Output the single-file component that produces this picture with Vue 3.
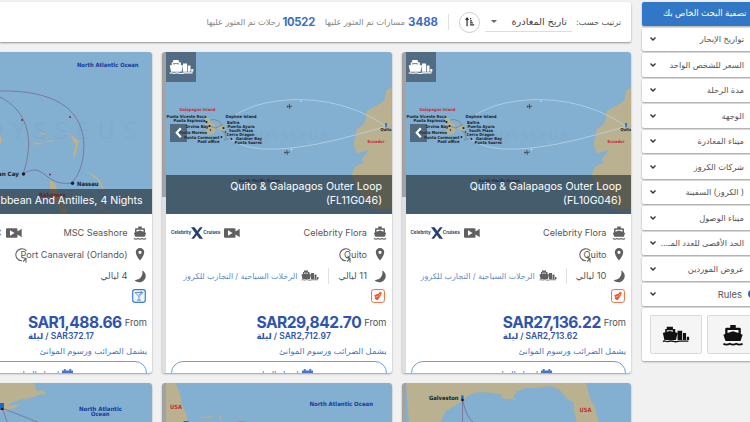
<script setup>
const filters = [
  'تواريخ الإبحار',
  'السعر للشخص الواحد',
  'مدة الرحلة',
  'الوجهة',
  'ميناء المغادرة',
  'شركات الكروز',
  '( الكروز) السفينة',
  'ميناء الوصول',
  'الحد الأقصى للعدد المـ...',
  'عروض الموردين',
  'Rules',
];

const cruises = [
  {
    id: 'msc',
    title: ['Bahamas, Caribbean And Antilles, 4 Nights'],
    ship: 'MSC Seashore',
    port: 'Port Canaveral (Orlando)',
    nights: 4,
    price: 'SAR1,488.66',
    perNight: 'SAR372.17',
  },
  {
    id: 'fl11',
    title: ['Quito & Galapagos Outer Loop', '(FL11G046)'],
    ship: 'Celebrity Flora',
    port: 'Quito',
    nights: 11,
    price: 'SAR29,842.70',
    perNight: 'SAR2,712.97',
    tour: true,
  },
  {
    id: 'fl10',
    title: ['Quito & Galapagos Outer Loop', '(FL10G046)'],
    ship: 'Celebrity Flora',
    port: 'Quito',
    nights: 10,
    price: 'SAR27,136.22',
    perNight: 'SAR2,713.62',
    tour: true,
  },
];

// [text, x, y, width]
const places = [
  ['Punta Vicente Roca', 167, 118, 40],
  ['Punta Espinoza', 174, 122.2, 32],
  ['Urvina Bay', 186, 127.6, 23],
  ['Punta Moreno', 179, 134.4, 28.5],
  ['Punta Cormorant', 184.5, 138.7, 35.5],
  ['Post office', 198, 143.4, 22],
  ['Daphne Island', 226, 118.2, 31],
  ['Baltra', 227.5, 123.5, 12.5],
  ['Puerto Ayora', 228, 127.8, 27],
  ['South Plaza', 229.5, 131.8, 24],
  ['Cerro Dragon', 227, 136.2, 28],
  ['Gardner Bay', 236.5, 140.2, 26],
  ['Punta Suarez', 235, 144.4, 27.5],
];
</script>

<template>
  <!-- shared icons -->
  <svg class="defs">
    <symbol id="ship" viewBox="0 0 24 24">
      <path d="M9 1h6v3h4q1.500 0 1.500 1.500V11l2 .8-2.300 6.700H3.800L1.500 11.800l2-.8V5.500Q3.500 4 5 4h4zM6 6.500v3.300l6-2 6 2V6.500z" fill-rule="evenodd" />
      <path d="M1.500 21.500c2.500 1.500 4.500 1.500 7 0 2.500 1.500 4.500 1.500 7 0 2.500 1.500 4.500 1.500 7 0" fill="none" stroke="currentColor" stroke-width="2" />
    </symbol>
    <symbol id="tour" viewBox="0 0 36 22">
      <path d="M6 1h8v3h3v4l3 1-2 9H3L1 9l3-1V4h2zM6 5.500v2l4-1 4 1v-2zM20 6h6v12h-6zM27 9h4v9h-4zM32 14h3v4h-3z" fill-rule="evenodd" />
      <path d="M1 20c3-2 4 1 7 0s4-1 7 0 5 0 7-.5h12" fill="none" stroke="currentColor" stroke-width="1.700" />
    </symbol>
    <symbol id="video" viewBox="0 0 16 10">
      <path d="M1 .3h9.500q1 0 1 1V3.500L15.700.8v8.400L11.500 6.500v2.300q0 1-1 1H1q-1 0-1-1V1.300q0-1 1-1zM4 2.300v5.400L8.500 5z" fill-rule="evenodd" />
    </symbol>
    <symbol id="plane" viewBox="-3 -3 6 6">
      <path d="M-2.800.2L2.800-.4M-.2-2.500L.3 2.500M-2.200-.9l.3 2" stroke="#3e4d59" stroke-width=".9" fill="none" />
    </symbol>
  </svg>

  <div class="page">
    <main class="main">
      <header class="toolbar" dir="rtl">
        <span class="sort-label">ترتيب حسب:</span>
        <div class="select"><span>تاريخ المغادرة</span><i class="caret"></i></div>
        <button class="round">
          <svg viewBox="0 0 12 12"><path d="M2.500 11V2M.8 3.500L2.500 1.300l1.700 2.200M6 2h1.500M6 4.500h2.500M6 7h3.500M6 9.500h5" /></svg>
        </button>
        <i class="rule"></i>
        <b class="count c1">3488</b><span class="found f1">مسارات تم العثور عليها</span>
        <b class="count c2">10522</b><span class="found">رحلات تم العثور عليها</span>
      </header>

      <div class="cards">
        <article v-for="c in cruises" :key="c.id" class="card">
          <div class="strip"></div>
          <div class="inner">
            <div class="hero">
              <svg v-if="c.tour" class="map" viewBox="166.500 52 225.500 162" preserveAspectRatio="none">
                <path class="land" d="M392 87l-5 3-2 10-8 6-10 5-2 12-8 7-2 10-1 4 3 9 6-1 5-2-1 4-5 5 2 3 3-1-12 6-3 8 8 17 13 17h20z" />
                <path class="land" d="M205 117l4 1 3 5 3 1 1 8-5 3-5-2 2-5-1-5zM219 125l6 1 1 4-5 1-3-3z" />
                <text class="mark" x="248" y="140" textLength="80">ODYSSEUS</text>
                <path class="route" d="M231 119C255 97 330 87 386 126M229 138C255 157 305 151 387 126" />
                <path class="near" d="M211 120q7-2 12 5l-7 3-6-2M222 130q7 7 3 10l7-2" />
                <g class="dot"><circle cx="207" cy="122" r="1" /><circle cx="210" cy="126" r="1" /><circle cx="211" cy="130" r=".8" /><circle cx="224" cy="128" r="1" /><circle cx="222" cy="137" r=".9" /><circle cx="232" cy="139" r=".9" /><circle cx="226" cy="132" r=".8" /></g>
                <text v-for="p in places" :key="p[0]" class="place" :x="p[1]" :y="p[2]" :textLength="p[3]" lengthAdjust="spacingAndGlyphs">{{ p[0] }}</text>
                <text class="place red" x="180" y="110.800" textLength="36" lengthAdjust="spacingAndGlyphs">Galapagos Island</text>
                <text class="place red" x="368" y="142.700" textLength="17" lengthAdjust="spacingAndGlyphs">Ecuador</text>
                <text class="place" x="381" y="130.500" textLength="11" lengthAdjust="spacingAndGlyphs">Quito</text>
                <path d="M385.800 123h1.400v4h-1.400z" fill="#1657c4" />
                <text class="place navy" x="239" y="182" textLength="41" lengthAdjust="spacingAndGlyphs">South Pacific Ocean</text>
                <use href="#plane" x="287" y="103.500" width="6" height="6" />
                <use href="#plane" x="284.500" y="149.500" width="6" height="6" />
                <circle cx="301.500" cy="101" r=".8" fill="#cfe4f3" />
                <circle cx="292" cy="149.500" r=".8" fill="#cfe4f3" />
              </svg>
              <svg v-else class="map" viewBox="-73 52 225.500 162" preserveAspectRatio="none">
                <text class="mark big" x="-40" y="139" textLength="176">ODYSSEUS</text>
                <path class="land" d="M0 133l2 7-2 5zM32 142l8 1 7-2 9-1-4 2-7 0-8 3zM39 132l9 2-5 1zM58 132l12 2 9 7-2 10-4 9 0-7 3-9-3-2-2-7-13-3zM88 171l6 4 7 6 3 9-2 0-3-8-6-5zM50 180l5 4 4 9 3 9 6 10-5 4-5-9-4-8-4-9zM110 187l2 3zM99 203l8 8-4-1zM147 209l4 2-4 1z" />
                <path class="cruise" d="M0 91C50 90 82 106 84 144Q84 170 72 183M0 97C28 111 35 140 23 174C45 160 43 187 72 183" />
                <circle cx="22" cy="120" r="1.100" fill="#862d46" /><circle cx="70" cy="117" r="1.100" fill="#862d46" /><circle cx="50" cy="174.500" r="1" fill="#862d46" />
                <circle cx="23.500" cy="174" r="1.700" /><circle cx="72.500" cy="183.300" r="1.700" />
                <text class="sea" x="77" y="67" textLength="61.500" lengthAdjust="spacingAndGlyphs">North Atlantic Ocean</text>
                <text class="city" x="-14" y="176" textLength="33" lengthAdjust="spacingAndGlyphs">Ocean Cay</text>
                <text class="city" x="77" y="185.500" textLength="21.500" lengthAdjust="spacingAndGlyphs">Nassau</text>
                <text class="city red" x="39" y="197" textLength="27" lengthAdjust="spacingAndGlyphs">Bahamas</text>
              </svg>
              <span v-if="c.tour" class="corner"><svg><use href="#tour" /></svg></span>
              <span v-if="c.tour" class="prev"><svg viewBox="0 0 8 12"><path d="M6 2L2.500 6 6 10" /></svg></span>
              <h3 class="title"><span v-for="t in c.title" :key="t">{{ t }}</span></h3>
            </div>

            <div class="body">
              <div class="row">
                <svg class="ico"><use href="#ship" /></svg>
                <span class="txt ship">{{ c.ship }}</span>
                <svg class="video"><use href="#video" /></svg>
                <span v-if="c.tour" class="logo"><em>Celebrity</em><svg viewBox="0 0 12 12"><path d="M0 .3h3.500L12 11.700H8.500zM9 .3h2.700L3 11.700H.3z" /></svg><em>Cruises</em></span>
                <span v-else class="brand">MSC</span>
              </div>
              <div class="row">
                <svg class="ico" viewBox="0 0 14 14"><path d="M7 1a4.200 4.200 0 0 0-4.200 4.300C2.800 8.500 7 13.500 7 13.500s4.200-5 4.200-8.200A4.200 4.200 0 0 0 7 1zm0 2.700a1.600 1.600 0 1 1 0 3.200 1.600 1.600 0 0 1 0-3.200z" /></svg>
                <span class="txt">{{ c.port }}</span>
                <svg class="return" viewBox="0 0 14 16"><path d="M12.500 4A6 6 0 1 0 8 13.800M8 10.500l4 1v4M12 11.500l-3 3" /></svg>
              </div>
              <div class="row">
                <svg class="ico" viewBox="0 0 14 14"><path d="M9.300 1.500C13 3.500 14 8 11 11.200 8.300 14 4 13.800 1.500 11c5 .3 9-4 7.800-9.500z" /></svg>
                <span class="nights" dir="rtl"><b>{{ c.nights }}</b> ليالي</span>
                <template v-if="c.tour">
                  <i class="sep"></i>
                  <svg class="tour"><use href="#tour" /></svg>
                  <span class="link" dir="rtl">الرحلات السياحية / التجارب للكروز</span>
                </template>
              </div>
              <div class="row badges">
                <svg v-if="c.tour" class="badge" viewBox="0 0 14 14"><rect x=".6" y=".6" width="12.800" height="12.800" rx="2" fill="none" stroke="#e96b45" /><path d="M3.500 6l4-1.500L9 2.800l1.800 1L10 6.500 6.500 11.300 4 10z" fill="#e65a31" /><path d="M4.500 8l3-1M7.500 4.500l2 2" stroke="#fff" stroke-width=".5" /></svg>
                <svg v-else class="badge" viewBox="0 0 14 14"><rect x=".7" y=".7" width="12.600" height="12.600" rx="2.200" fill="#eef6ff" stroke="#3d7ccb" stroke-width="1.200" /><path d="M3 3.500h8L7 7.500zM7 7.500v3.500M5 11.200h4M9.500 2l-2 4" fill="none" stroke="#4f86cf" stroke-width=".9" /></svg>
              </div>
              <div class="price-line">
                <div class="prices">
                  <strong>{{ c.price }}</strong>
                  <span class="per"><i dir="rtl">ليلة</i> / {{ c.perNight }}</span>
                </div>
                <span class="from">From</span>
              </div>
              <div class="tax" dir="rtl">يشمل الضرائب ورسوم الموانئ</div>
              <button class="dates" dir="rtl">
                <svg viewBox="0 0 12 12"><path d="M2 0h2v1.500h4V0h2v1.500h2V12H0V1.500h2z" /></svg>
                <span>إختيار التواريخ</span>
              </button>
            </div>
          </div>
        </article>
      </div>

      <div class="cards next">
        <article class="card">
          <div class="strip"></div>
          <svg class="map" viewBox="-73 383 225.500 100">
            <path class="land" d="M-73 383H34l3 8 7-1 2 4-8 1-7 3-12 2-14 6 17-2-10 5-13 3-9 20h-73z" />
            <path class="cruise" d="M2 407L8 425M2 408L40 423" />
            <path d="M0 403h4v7H0z" fill="#126bd3" /><circle cx="2.200" cy="409" r="1.300" />
            <text class="sea" x="79" y="410.500" textLength="43" lengthAdjust="spacingAndGlyphs">North Atlantic</text>
            <text class="sea" x="91" y="416" textLength="18.500" lengthAdjust="spacingAndGlyphs">Ocean</text>
          </svg>
        </article>
        <article class="card">
          <div class="strip"></div>
          <svg class="map" viewBox="166.500 383 225.500 100">
            <path class="land" d="M166 383h10l5 11 1 10 5 10 2 9h-23zM200 417l12-1 3 1-14 1zM217 413l5 4v6l-2-6z" />
            <path d="M184 421h5v3h-5z" fill="#126bd3" /><path class="cruise" d="M229 423q13-2 26 0" />
            <text class="city red" x="170.500" y="408.500" textLength="12" lengthAdjust="spacingAndGlyphs">USA</text>
            <text class="sea" x="310" y="406" textLength="63.500" lengthAdjust="spacingAndGlyphs">North Atlantic Ocean</text>
          </svg>
        </article>
        <article class="card">
          <div class="strip"></div>
          <svg class="map" viewBox="406 383 225.500 100">
            <path class="land" d="M406 383h180l4 15 5 9 4 16h-22l-3-11 0-9-9-6-5-7-10-4-12 2-13 0-9 4-3 6 4 2-8-1-10-1 4-3-10-2-14-1-10 3-8 7-15 9-6 12h-31z" />
            <path class="cruise" d="M462.500 401v23M463 401q3 16 11 22" />
            <path d="M461.200 395.500h2.400v5h-2.400z" fill="#126bd3" /><circle cx="462.500" cy="400" r="1.300" />
            <text class="city" x="429" y="399.500" textLength="29.500" lengthAdjust="spacingAndGlyphs">Galveston</text>
            <text class="city red" x="579.500" y="412" textLength="12" lengthAdjust="spacingAndGlyphs">USA</text>
          </svg>
        </article>
      </div>
    </main>

    <aside class="sidebar" dir="rtl">
      <div class="side-head">تصفية البحث الخاص بك</div>
      <div v-for="f in filters" :key="f" class="filter">
        <i v-if="f === 'Rules'" class="info"></i>
        <span :class="{ latin: f === 'Rules' }">{{ f }}</span>
        <svg viewBox="0 0 8 6"><path d="M1.500 1.500L4 4l2.500-2.500" /></svg>
      </div>
      <div class="types">
        <div class="type"><svg class="t-ship"><use href="#ship" /></svg></div>
        <div class="type"><svg class="t-tour"><use href="#tour" /></svg></div>
      </div>
    </aside>
  </div>
</template>

<style>
body {
  overflow: hidden;
  background: #f1f1f1;
}
</style>

<style scoped>
.defs {
  position: absolute;
  width: 0;
  height: 0;
}
.page {
  width: 750px;
  height: 422px;
  box-sizing: border-box;
  padding-top: 2px;
  display: flex;
  gap: 10.5px;
  overflow: hidden;
  background: #f1f1f1;
  font-family: Inter, 'DejaVu Sans', sans-serif;
  font-size: 10px;
  color: #555;
}
svg {
  display: block;
  fill: currentColor;
  flex: none;
}
button {
  font: inherit;
  padding: 0;
}
.main {
  width: 631px;
  flex: none;
}
.toolbar {
  height: 40px;
  box-sizing: border-box;
  padding-right: 10px;
  display: flex;
  align-items: center;
  background: #fff;
  border-radius: 0 2px 2px 0;
  box-shadow: 0 1px 2px rgba(0, 0, 0, 0.4);
  white-space: nowrap;
}
.toolbar > * {
  flex: none;
}
.sort-label {
  width: 49px;
  font-size: 8.2px;
  color: #555;
}
.select {
  width: 87px;
  height: 20px;
  box-sizing: border-box;
  padding: 0 5px 0 2px;
  display: flex;
  align-items: center;
  justify-content: space-between;
  border-bottom: 1px solid #ddd;
  font-size: 9.8px;
  color: #444;
}
.caret {
  border: 3px solid transparent;
  border-top-color: #666;
  border-bottom: 0;
  margin-left: 4px;
}
.round {
  width: 21px;
  height: 21px;
  box-sizing: border-box;
  margin-right: 5px;
  display: grid;
  place-items: center;
  border: 1px solid #ccc;
  border-radius: 50%;
  background: #fff;
}
.round svg {
  width: 10px;
  fill: none;
  stroke: #333;
  stroke-width: 1.5;
}
.rule {
  width: 1px;
  height: 16px;
  margin: 0 10px;
  background: #e2e2e2;
}
.count {
  font-size: 11.4px;
  color: #3a6dbd;
}
.c1 {
  width: 33px;
}
.c2 {
  width: 35px;
  font-size: 11.2px;
  letter-spacing: -0.2px;
}
.found {
  font-size: 8.4px;
  color: #888;
}
.f1 {
  width: 90px;
}
.cards {
  display: flex;
  justify-content: flex-end;
  gap: 10px;
  margin-top: 10px;
}
.card {
  width: 229.5px;
  height: 321px;
  flex: none;
  display: flex;
  overflow: hidden;
  background: #fff;
  border-radius: 3px;
  box-shadow: 0 1px 2px rgba(0, 0, 0, 0.35);
}
.next .card {
  height: 60px;
}
.strip {
  width: 4px;
  flex: none;
  background: linear-gradient(#a2a2a2 145px, #dedede 145px);
}
.inner {
  width: 225.5px;
}
.hero {
  position: relative;
  height: 162px;
}
.map {
  width: 225.5px;
  height: 162px;
  background: #83afd0;
  fill: #171c26;
}
.next .map {
  height: 100px;
}
.land {
  fill: #b9b190;
}
.route {
  fill: none;
  stroke: #b8d4e8;
  stroke-width: 0.8;
}
.near {
  fill: none;
  stroke: #6c6472;
  stroke-width: 0.5;
}
.cruise {
  fill: none;
  stroke: #715a79;
  stroke-width: 0.6;
}
.dot {
  fill: #141a24;
}
.mark {
  font: 13px 'Open Sans', sans-serif;
  fill: #7facce;
}
.big {
  font-size: 23px;
}
.place {
  font: bold 4.2px 'DejaVu Sans', sans-serif;
}
.city,
.sea {
  font: bold 5.8px 'DejaVu Sans', sans-serif;
}
.sea,
.navy {
  fill: #173a97;
}
.red {
  fill: #c62b36;
}
.corner {
  position: absolute;
  left: 0;
  top: 0;
  width: 30px;
  height: 30px;
  display: grid;
  place-items: center;
  background: rgba(50, 68, 84, 0.62);
  color: #fff;
}
.corner svg {
  width: 25px;
  height: 16px;
}
.prev {
  position: absolute;
  left: 4px;
  top: 72px;
  width: 17px;
  height: 18px;
  display: grid;
  place-items: center;
  background: rgba(50, 60, 72, 0.6);
}
.prev svg {
  width: 9px;
  fill: none;
  stroke: #fff;
  stroke-width: 2;
}
.title {
  position: absolute;
  left: 0;
  right: 0;
  bottom: 0;
  margin: 0;
  padding: 5px 9.5px 5.5px;
  display: flex;
  flex-direction: column;
  align-items: flex-end;
  background: rgba(29, 37, 43, 0.6);
  color: #fff;
  font-size: 10.6px;
  font-weight: 400;
  line-height: 14.5px;
  white-space: nowrap;
}
.body {
  padding: 8px 5px 0;
}
.row {
  height: 21.5px;
  display: flex;
  flex-direction: row-reverse;
  align-items: center;
  white-space: nowrap;
}
.ico {
  width: 14px;
  height: 14px;
  color: #606060;
}
.txt {
  margin-right: 5.5px;
  font-size: 9.15px;
}
.ship {
  margin-left: auto;
}
.video {
  width: 16px;
  height: 10px;
  color: #606060;
}
.brand {
  width: 70px;
  margin-right: 4px;
  text-align: right;
  font-size: 9.15px;
}
.logo {
  margin-right: 4px;
  display: flex;
  align-items: center;
  color: #243f70;
}
.logo em {
  font: bold 4.5px Inter, sans-serif;
}
.logo svg {
  width: 12px;
  height: 12px;
}
.return {
  width: 14px;
  height: 16px;
  margin-right: -8px;
  margin-top: 2px;
  fill: none;
  stroke: #666;
  stroke-width: 1.1;
}
.nights {
  margin-right: 5.5px;
  font-size: 9px;
}
.nights b {
  font-size: 9.4px;
  font-weight: 400;
}
.sep {
  width: 1px;
  height: 16px;
  margin: 0 9px;
  background: #e2e2e2;
}
.tour {
  width: 18px;
  height: 11px;
  color: #606060;
}
.link {
  margin-right: 4px;
  font-size: 8px;
  color: #5f8acb;
}
.badges {
  height: 18px;
  padding-right: 1.5px;
}
.badge {
  width: 14px;
  height: 14px;
}
.price-line {
  height: 38px;
  margin-top: 4px;
  display: flex;
  justify-content: flex-end;
  gap: 3px;
}
.prices {
  display: flex;
  flex-direction: column;
  color: #2f54ad;
}
.prices strong {
  margin-top: 5px;
  font-size: 15.6px;
  letter-spacing: -0.5px;
  line-height: 17px;
}
.per {
  font-size: 8.5px;
  font-weight: 600;
  line-height: 11px;
}
.per i {
  font-style: normal;
}
.from {
  margin-top: 7px;
  font-size: 9.3px;
  line-height: 13px;
}
.tax {
  height: 14px;
  margin-top: -3px;
  font-size: 8.35px;
  line-height: 14px;
  color: #4877c0;
}
.dates {
  width: 100%;
  height: 24px;
  box-sizing: border-box;
  margin-top: 3px;
  padding: 4px 0 0 5px;
  display: flex;
  align-items: center;
  justify-content: center;
  gap: 3px;
  border: 1px solid #6f9bd5;
  border-radius: 12px;
  background: #fff;
  color: #4877c0;
  font-size: 8.6px;
}
.dates svg {
  width: 11px;
}
.sidebar {
  width: 124px;
  flex: none;
}
.side-head {
  height: 23.5px;
  padding-right: 19px;
  border-radius: 2px;
  background: #3276c6;
  color: #fff;
  font-size: 8.6px;
  line-height: 23px;
  white-space: nowrap;
  box-shadow: 0 1px 2px rgba(0, 0, 0, 0.3);
}
.filter {
  height: 23.5px;
  margin-top: 2px;
  box-sizing: border-box;
  padding: 0 21.5px 0 7px;
  display: flex;
  align-items: center;
  justify-content: space-between;
  border-radius: 2px;
  background: #fff;
  box-shadow: 0 1px 2px rgba(0, 0, 0, 0.35);
  font-size: 8.3px;
  white-space: nowrap;
}
.filter svg {
  width: 8px;
  fill: none;
  stroke: #333;
  stroke-width: 1.4;
}
.info {
  width: 8px;
  height: 8px;
  margin: 0 -12px 0 6px;
  border-radius: 50%;
  background: #3b5fb5;
}
.latin {
  margin-left: auto;
  font-size: 9.4px;
}
.types {
  height: 53px;
  margin-top: 2px;
  box-sizing: border-box;
  padding: 7px 8px;
  display: flex;
  justify-content: flex-end;
  gap: 5px;
  background: #fff;
  border-radius: 2px;
  box-shadow: 0 1px 2px rgba(0, 0, 0, 0.35);
  color: #111;
}
.type {
  width: 52px;
  height: 39px;
  box-sizing: border-box;
  flex: none;
  display: grid;
  place-items: center;
  border: 1px solid #d9d9d9;
  border-radius: 2px;
  background: #f5f5f5;
}
.t-ship {
  width: 22px;
  height: 22px;
}
.t-tour {
  width: 28px;
  height: 17px;
}
</style>
